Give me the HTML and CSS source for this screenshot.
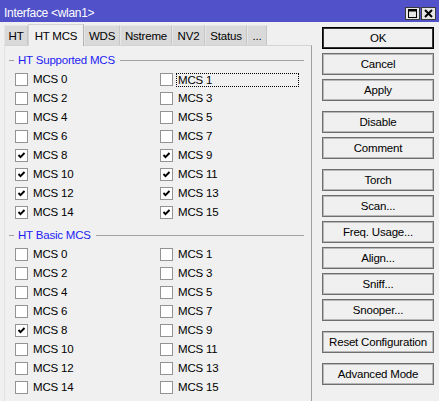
FILE: index.html
```html
<!DOCTYPE html>
<html>
<head>
<meta charset="utf-8">
<link rel="stylesheet" href="styles.css">
</head>
<body>
<div class="window">
  <div class="titlebar">
    <span class="title">Interface &lt;wlan1&gt;</span>
    <div class="tb-btns">
      <span class="tb-btn"><svg width="15" height="13" viewBox="0 0 15 13"><rect x="0.5" y="0.5" width="14" height="12" fill="#e6e6e6" stroke="#3a3a3a"/><rect x="3.5" y="2.5" width="8" height="8" fill="none" stroke="#000"/><line x1="3" y1="3.5" x2="12" y2="3.5" stroke="#000" stroke-width="2"/></svg></span>
      <span class="tb-btn"><svg width="15" height="13" viewBox="0 0 15 13"><rect x="0.5" y="0.5" width="14" height="12" fill="#e6e6e6" stroke="#3a3a3a"/><path d="M4 3 L11 10 M11 3 L4 10" stroke="#000" stroke-width="2"/></svg></span>
    </div>
  </div>
  <div class="main">
    <div class="left">
      <div class="tabs">
        <div class="tab w-ht">HT</div>
        <div class="tab active w-htmcs">HT MCS</div>
        <div class="tab w-wds">WDS</div>
        <div class="tab w-nst">Nstreme</div>
        <div class="tab w-nv2">NV2</div>
        <div class="tab w-status">Status</div>
        <div class="tab w-more">...</div>
      </div>
      <div class="panel">
        <div class="group-head"><span class="dash"></span><span class="gtitle">HT Supported MCS</span><span class="gline"></span></div>
        <div class="grid">
          <div class="cb"><span class="box"></span><span class="lbl">MCS 0</span></div>
          <div class="cb"><span class="box"></span><span class="lbl focus">MCS 1</span></div>
          <div class="cb"><span class="box"></span><span class="lbl">MCS 2</span></div>
          <div class="cb"><span class="box"></span><span class="lbl">MCS 3</span></div>
          <div class="cb"><span class="box"></span><span class="lbl">MCS 4</span></div>
          <div class="cb"><span class="box"></span><span class="lbl">MCS 5</span></div>
          <div class="cb"><span class="box"></span><span class="lbl">MCS 6</span></div>
          <div class="cb"><span class="box"></span><span class="lbl">MCS 7</span></div>
          <div class="cb"><span class="box"><svg width="11" height="11" viewBox="0 0 11 11"><polyline points="2.5,5 4.5,7.2 8.5,3" fill="none" stroke="#000" stroke-width="1.9"/></svg></span><span class="lbl">MCS 8</span></div>
          <div class="cb"><span class="box"><svg width="11" height="11" viewBox="0 0 11 11"><polyline points="2.5,5 4.5,7.2 8.5,3" fill="none" stroke="#000" stroke-width="1.9"/></svg></span><span class="lbl">MCS 9</span></div>
          <div class="cb"><span class="box"><svg width="11" height="11" viewBox="0 0 11 11"><polyline points="2.5,5 4.5,7.2 8.5,3" fill="none" stroke="#000" stroke-width="1.9"/></svg></span><span class="lbl">MCS 10</span></div>
          <div class="cb"><span class="box"><svg width="11" height="11" viewBox="0 0 11 11"><polyline points="2.5,5 4.5,7.2 8.5,3" fill="none" stroke="#000" stroke-width="1.9"/></svg></span><span class="lbl">MCS 11</span></div>
          <div class="cb"><span class="box"><svg width="11" height="11" viewBox="0 0 11 11"><polyline points="2.5,5 4.5,7.2 8.5,3" fill="none" stroke="#000" stroke-width="1.9"/></svg></span><span class="lbl">MCS 12</span></div>
          <div class="cb"><span class="box"><svg width="11" height="11" viewBox="0 0 11 11"><polyline points="2.5,5 4.5,7.2 8.5,3" fill="none" stroke="#000" stroke-width="1.9"/></svg></span><span class="lbl">MCS 13</span></div>
          <div class="cb"><span class="box"><svg width="11" height="11" viewBox="0 0 11 11"><polyline points="2.5,5 4.5,7.2 8.5,3" fill="none" stroke="#000" stroke-width="1.9"/></svg></span><span class="lbl">MCS 14</span></div>
          <div class="cb"><span class="box"><svg width="11" height="11" viewBox="0 0 11 11"><polyline points="2.5,5 4.5,7.2 8.5,3" fill="none" stroke="#000" stroke-width="1.9"/></svg></span><span class="lbl">MCS 15</span></div>
        </div>
        <div class="group-head second"><span class="dash"></span><span class="gtitle">HT Basic MCS</span><span class="gline"></span></div>
        <div class="grid">
          <div class="cb"><span class="box"></span><span class="lbl">MCS 0</span></div>
          <div class="cb"><span class="box"></span><span class="lbl">MCS 1</span></div>
          <div class="cb"><span class="box"></span><span class="lbl">MCS 2</span></div>
          <div class="cb"><span class="box"></span><span class="lbl">MCS 3</span></div>
          <div class="cb"><span class="box"></span><span class="lbl">MCS 4</span></div>
          <div class="cb"><span class="box"></span><span class="lbl">MCS 5</span></div>
          <div class="cb"><span class="box"></span><span class="lbl">MCS 6</span></div>
          <div class="cb"><span class="box"></span><span class="lbl">MCS 7</span></div>
          <div class="cb"><span class="box"><svg width="11" height="11" viewBox="0 0 11 11"><polyline points="2.5,5 4.5,7.2 8.5,3" fill="none" stroke="#000" stroke-width="1.9"/></svg></span><span class="lbl">MCS 8</span></div>
          <div class="cb"><span class="box"></span><span class="lbl">MCS 9</span></div>
          <div class="cb"><span class="box"></span><span class="lbl">MCS 10</span></div>
          <div class="cb"><span class="box"></span><span class="lbl">MCS 11</span></div>
          <div class="cb"><span class="box"></span><span class="lbl">MCS 12</span></div>
          <div class="cb"><span class="box"></span><span class="lbl">MCS 13</span></div>
          <div class="cb"><span class="box"></span><span class="lbl">MCS 14</span></div>
          <div class="cb"><span class="box"></span><span class="lbl">MCS 15</span></div>
        </div>
      </div>
    </div>
    <div class="buttons">
      <div class="bgroup">
        <div class="btn default">OK</div>
        <div class="btn">Cancel</div>
        <div class="btn">Apply</div>
      </div>
      <div class="bgroup">
        <div class="btn">Disable</div>
        <div class="btn">Comment</div>
      </div>
      <div class="bgroup">
        <div class="btn">Torch</div>
        <div class="btn">Scan...</div>
        <div class="btn">Freq. Usage...</div>
        <div class="btn">Align...</div>
        <div class="btn">Sniff...</div>
        <div class="btn">Snooper...</div>
      </div>
      <div class="bgroup">
        <div class="btn">Reset Configuration</div>
      </div>
      <div class="bgroup">
        <div class="btn">Advanced Mode</div>
      </div>
    </div>
  </div>
</div>
</body>
</html>
```

FILE: styles.css
```css
* { box-sizing: border-box; }
html, body {
  margin: 0;
  padding: 0;
  width: 439px;
  height: 401px;
  overflow: hidden;
  background: #f0f0f0;
  font-family: "Liberation Sans", Arial, sans-serif;
  font-size: 11px;
  color: #000;
}
.window {
  display: flex;
  flex-direction: column;
  height: 401px;
}
.titlebar {
  height: 22px;
  background: #5151c9;
  display: flex;
  align-items: center;
  justify-content: space-between;
  padding: 1px 3px 0 4px;
}
.title {
  color: #fff;
  font-size: 12px;
  letter-spacing: -0.3px;
  padding-top: 2px;
}
.tb-btns {
  display: flex;
  gap: 1px;
  padding-top: 4px;
}
.tb-btn { display: block; height: 13px; }
.tb-btn svg { display: block; }
.main {
  flex: 1;
  display: flex;
  min-height: 0;
}
.left {
  width: 308px;
  margin-left: 4px;
  display: flex;
  flex-direction: column;
}
.tabs {
  margin-top: 2px;
  height: 21px;
  display: flex;
  align-items: flex-end;
  position: relative;
  z-index: 1;
}
.tab {
  height: 20px;
  background: #d9d9d9;
  border: 1px solid #e6e6e6;
  border-bottom: none;
  border-right-color: #c6c6c6;
  display: flex;
  align-items: center;
  justify-content: center;
  letter-spacing: -0.2px;
  font-size: 11.5px;
  padding-top: 1px;
}
.tab.active {
  height: 22px;
  margin-bottom: -1px;
  background: #f0f0f0;
  border-color: #d4d4d4;
  border-right-color: #b4b4b4;
}
.w-ht { width: 24px; }
.w-htmcs { width: 56px; }
.w-wds { width: 36px; }
.w-nst { width: 52px; }
.w-nv2 { width: 33px; }
.w-status { width: 42px; }
.w-more { width: 20px; }
.panel {
  flex: 1;
  border-top: 1px solid #d4d4d4;
  border-left: 1px solid #e2e2e2;
  border-right: 1px solid #a0a0a0;
  padding-top: 7px;
}
.group-head {
  display: flex;
  align-items: center;
  height: 14px;
  margin-left: 4px;
  margin-right: 7px;
}
.group-head.second { margin-top: 6px; }
.dash {
  width: 5px;
  height: 1px;
  background: #a0a0a0;
}
.gtitle {
  color: #1c1cf5;
  margin: 0 5px 0 4px;
  letter-spacing: -0.2px;
  font-size: 11.5px;
}
.gline {
  flex: 1;
  height: 1px;
  background: #a0a0a0;
}
.grid {
  display: grid;
  grid-template-columns: 145px 139px;
  grid-auto-rows: 19px;
  margin-top: 3px;
  padding-left: 10px;
}
.cb {
  display: flex;
  align-items: center;
}
.box {
  width: 13px;
  height: 13px;
  border: 1px solid #939393;
  background: #fff;
  display: flex;
  align-items: center;
  justify-content: center;
  flex: none;
}
.box svg { display: block; }
.lbl {
  margin-left: 5px;
  letter-spacing: -0.2px;
  font-size: 11.5px;
  line-height: 13px;
}
.lbl.focus {
  flex: 1;
  margin-left: 3px;
  padding-left: 1px;
  border: 1px dotted #000;
  line-height: 12px;
}
.buttons {
  width: 112px;
  margin-left: 10px;
  padding-top: 5px;
  display: flex;
  flex-direction: column;
  gap: 10px;
}
.bgroup {
  display: flex;
  flex-direction: column;
  gap: 4px;
}
.btn {
  height: 22px;
  border: 1px solid #6e6e6e;
  box-shadow: inset 0 0 0 1px #b8b8b8;
  background: #f0f0f0;
  display: flex;
  align-items: center;
  justify-content: center;
  letter-spacing: -0.2px;
  font-size: 11.5px;
}
.btn.default {
  border-color: #000;
  box-shadow: inset 0 0 0 1px #333;
}
```
